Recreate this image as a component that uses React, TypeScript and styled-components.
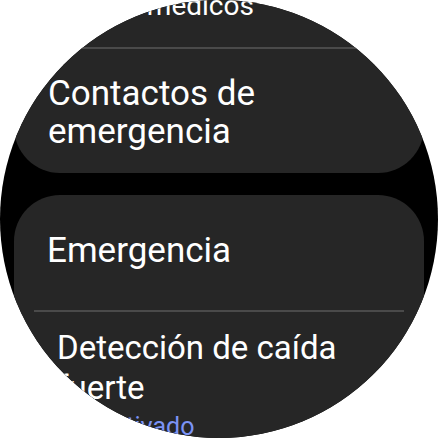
import React from 'react';
import styled, { createGlobalStyle } from 'styled-components';

const GlobalStyle = createGlobalStyle`
  html, body {
    margin: 0;
    padding: 0;
    background: #ffffff;
  }
  body {
    font-family: Roboto, "Noto Sans", sans-serif;
    -webkit-font-smoothing: antialiased;
  }
`;

const Watch = styled.div`
  width: 438px;
  height: 438px;
  border-radius: 50%;
  overflow: hidden;
  background: #000000;
`;

// scrolled list, part of the first card is above the screen
const List = styled.div`
  display: flex;
  flex-direction: column;
  gap: 22px;
  margin-top: -39px;
  padding: 0 14px;
`;

const Card = styled.div`
  background: #262626;
  border-radius: 46px;
  display: flex;
  flex-direction: column;
`;

const Divider = styled.div`
  height: 2px;
  margin: 0 20px;
  background: #4a4a4a;
`;

const Row = styled.div<{ $top: number; $bottom: number; $left: number }>`
  display: flex;
  flex-direction: column;
  padding: ${(p) => p.$top}px 24px ${(p) => p.$bottom}px ${(p) => p.$left}px;
`;

const Label = styled.div<{ $size: number; $line: number }>`
  color: #ffffff;
  font-size: ${(p) => p.$size}px;
  line-height: ${(p) => p.$line}px;
  font-weight: 400;
`;

const Status = styled.div`
  color: #7b93f5;
  font-size: 25px;
  line-height: 30px;
  margin-top: 4px;
`;

const App: React.FC = () => {
  return (
    <>
      <GlobalStyle />
      <Watch>
        <List>
          <Card>
            <Row $top={29} $bottom={25} $left={53}>
              <Label $size={28} $line={32}>Datos médicos</Label>
            </Row>
            <Divider />
            <Row $top={26} $bottom={22} $left={34}>
              <Label $size={35} $line={38}>Contactos de emergencia</Label>
            </Row>
          </Card>

          <Card>
            <Row $top={36} $bottom={39} $left={33}>
              <Label $size={35} $line={40}>Emergencia</Label>
            </Row>
            <Divider />
            <Row $top={16} $bottom={30} $left={43}>
              <Label $size={33} $line={40}>Detección de caída fuerte</Label>
              <Status>Desactivado</Status>
            </Row>
          </Card>
        </List>
      </Watch>
    </>
  );
};

export default App;
